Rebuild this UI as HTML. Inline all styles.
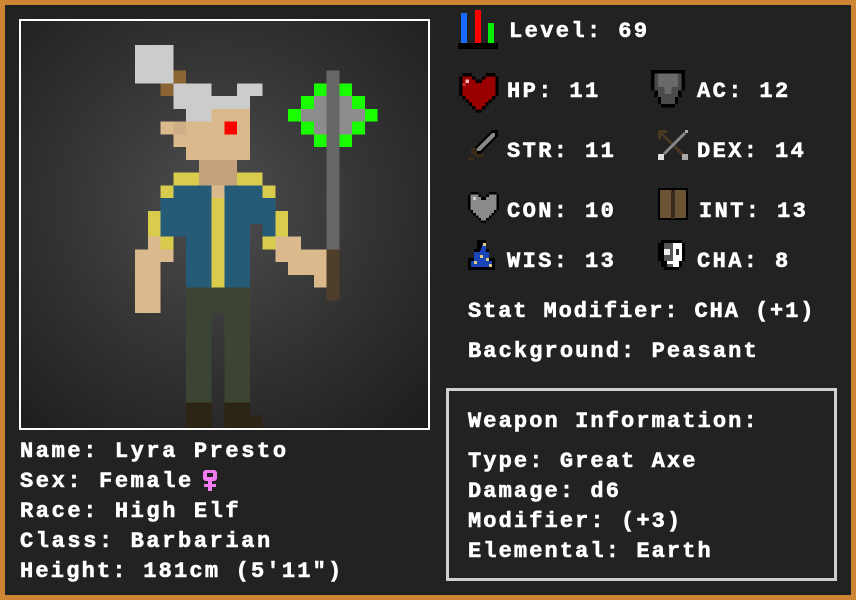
<!DOCTYPE html>
<html><head><style>
*{margin:0;padding:0;box-sizing:border-box}
body{width:856px;height:600px;background:#cd8534;position:relative;overflow:hidden}
#bg{position:absolute;left:5px;top:5px;width:846px;height:590px;background:#222}
#port{position:absolute;left:19px;top:19px;width:411px;height:411px;border:2px solid #fff;background:radial-gradient(circle at 48% 45%,#4e4e4e 0%,#363636 45%,#1c1c1c 100%)}
.t{position:absolute;color:#fff;font-family:"Liberation Mono",monospace;font-weight:bold;font-size:22px;letter-spacing:2.4px;white-space:nowrap;line-height:22px;-webkit-text-stroke:0.6px #fff}
#wb{position:absolute;left:446px;top:388px;width:391px;height:193px;border:3px solid #cfcfcf}
svg{position:absolute}
</style></head><body>
<div id="bg"></div>
<div id="port"></div>
<svg style="left:0;top:0" width="856" height="600" shape-rendering="crispEdges">
<g transform="translate(135,45) scale(12.77)">
<rect x="0" y="0" width="3" height="3" fill="#cccccc"/>
<rect x="3" y="2" width="1" height="1" fill="#8b6434"/>
<rect x="2" y="3" width="1" height="1" fill="#8b6434"/>
<rect x="3" y="3" width="3" height="2" fill="#cccccc"/>
<rect x="8" y="3" width="2" height="1" fill="#cccccc"/>
<rect x="6" y="4" width="3" height="1" fill="#cccccc"/>
<rect x="4" y="5" width="2" height="1" fill="#cccccc"/>
<rect x="6" y="5" width="3" height="1" fill="#dab98c"/>
<rect x="2" y="6" width="7" height="1" fill="#dab98c"/>
<rect x="3" y="6" width="1" height="1" fill="#d0ae88"/>
<rect x="3" y="7" width="6" height="1" fill="#dab98c"/>
<rect x="4" y="8" width="5" height="1" fill="#dab98c"/>
<rect x="7" y="6" width="1" height="1" fill="#ff0000"/>
<rect x="5" y="9" width="3" height="2" fill="#c4a37c"/>
<rect x="3" y="10" width="2" height="1" fill="#d9cc4c"/>
<rect x="8" y="10" width="2" height="1" fill="#d9cc4c"/>
<rect x="2" y="11" width="1" height="1" fill="#d9cc4c"/>
<rect x="10" y="11" width="1" height="1" fill="#d9cc4c"/>
<rect x="3" y="11" width="3" height="1" fill="#265b78"/>
<rect x="7" y="11" width="3" height="1" fill="#265b78"/>
<rect x="6" y="11" width="1" height="1" fill="#dab98c"/>
<rect x="2" y="12" width="9" height="2" fill="#265b78"/>
<rect x="2" y="14" width="7" height="1" fill="#265b78"/>
<rect x="10" y="14" width="1" height="1" fill="#265b78"/>
<rect x="4" y="15" width="5" height="4" fill="#265b78"/>
<rect x="6" y="12" width="1" height="7" fill="#d9cc4c"/>
<rect x="1" y="13" width="1" height="2" fill="#d9cc4c"/>
<rect x="11" y="13" width="1" height="2" fill="#d9cc4c"/>
<rect x="2" y="15" width="1" height="1" fill="#d9cc4c"/>
<rect x="10" y="15" width="1" height="1" fill="#d9cc4c"/>
<rect x="1" y="15" width="1" height="1" fill="#dab98c"/>
<rect x="0" y="16" width="3" height="1" fill="#dab98c"/>
<rect x="0" y="17" width="2" height="4" fill="#dab98c"/>
<rect x="11" y="15" width="2" height="1" fill="#dab98c"/>
<rect x="11" y="16" width="4" height="1" fill="#dab98c"/>
<rect x="12" y="17" width="3" height="1" fill="#dab98c"/>
<rect x="14" y="18" width="1" height="1" fill="#dab98c"/>
<rect x="4" y="19" width="5" height="2" fill="#3c4433"/>
<rect x="4" y="21" width="2" height="7" fill="#3c4433"/>
<rect x="7" y="21" width="2" height="7" fill="#3c4433"/>
<rect x="4" y="28" width="2" height="2" fill="#2c2414"/>
<rect x="7" y="28" width="2" height="2" fill="#2c2414"/>
<rect x="9" y="29" width="1" height="1" fill="#2c2414"/>
<rect x="15" y="2" width="1" height="14" fill="#666"/>
<rect x="15" y="16" width="1" height="4" fill="#4f3e2a"/>
<rect x="14" y="4" width="1" height="3" fill="#8c8c8c"/>
<rect x="16" y="4" width="1" height="3" fill="#8c8c8c"/>
<rect x="13" y="5" width="1" height="1" fill="#8c8c8c"/>
<rect x="17" y="5" width="1" height="1" fill="#8c8c8c"/>
<g fill="#1aff00">
<rect x="14" y="3" width="1" height="1"/><rect x="16" y="3" width="1" height="1"/>
<rect x="13" y="4" width="1" height="1"/><rect x="17" y="4" width="1" height="1"/>
<rect x="12" y="5" width="1" height="1"/><rect x="18" y="5" width="1" height="1"/>
<rect x="13" y="6" width="1" height="1"/><rect x="17" y="6" width="1" height="1"/>
<rect x="14" y="7" width="1" height="1"/><rect x="16" y="7" width="1" height="1"/>
</g>
</g>
<!-- level icon -->
<rect x="458" y="43" width="40" height="6" fill="#000"/>
<rect x="461" y="13" width="6" height="30" fill="#1a6cff"/>
<rect x="475" y="10" width="6" height="33" fill="#f00"/>
<rect x="488" y="23" width="6" height="20" fill="#0e0"/>
<!-- heart -->
<g transform="translate(459,73) scale(3.3)">
<path d="M1 0h3v1h1v1h2v-1h1v-1h3v1h1v6h-1v1h-1v1h-1v1h-1v1h-1v1h-2v-1h-1v-1h-1v-1h-1v-1h-1v-1h-1v-6h1z" fill="#000"/>
<path d="M1 1h3v1h1v1h2v-1h1v-1h3v6h-1v1h-1v1h-1v1h-1v1h-2v-1h-1v-1h-1v-1h-1v-1h-1z" fill="#9a0000"/>
<rect x="2" y="2" width="1" height="1" fill="#f2b6b6"/><rect x="1" y="3" width="1" height="1" fill="#c33"/>
</g>
<!-- shield -->
<g transform="translate(651,70) scale(3.4)">
<path d="M0 0h10v6h-1v2h-1v2h-1v1h-4v-1h-1v-2h-1v-2h-1z" fill="#000"/>
<path d="M1 1h8v5h-1v2h-1v2h-4v-2h-1v-2h-1z" fill="#4a4a4a"/>
<path d="M2 1h6v4h-2v2h-2v-2h-2z" fill="#6a6a6a"/>
</g>
<!-- sword -->
<g transform="translate(468,130) scale(3)">
<path d="M8 0h2v2l-6 6h-2v-2z" fill="#000"/>
<path d="M8 1h1v1l-5 5h-1v-1z" fill="#888"/>
<rect x="1" y="6" width="2" height="2" fill="#3a2a1a"/><rect x="3" y="8" width="2" height="1" fill="#3a2a1a"/><rect x="0" y="9" width="2" height="1" fill="#3a2a1a"/><rect x="2" y="8" width="1" height="1" fill="#3a2a1a"/>
</g>
<!-- crossbow -->
<g transform="translate(658,130) scale(3)">
<rect x="0" y="0" width="3" height="1" fill="#4a3a22"/><rect x="0" y="1" width="1" height="2" fill="#4a3a22"/>
<path d="M1 1l8 8" stroke="#4a3a22" stroke-width="1" fill="none" shape-rendering="auto"/>
<path d="M9 1l-7 7" stroke="#888" stroke-width="1" fill="none" shape-rendering="auto"/>
<rect x="9" y="0" width="1" height="1" fill="#aaa"/>
<rect x="0" y="8" width="2" height="2" fill="#ddd"/>
<rect x="8" y="8" width="2" height="2" fill="#aaa"/>
</g>
<!-- con heart gray -->
<g transform="translate(468,192) scale(2.6)">
<path d="M1 0h3v1h1v1h2v-1h1v-1h3v1h1v6h-1v1h-1v1h-1v1h-1v1h-1v1h-2v-1h-1v-1h-1v-1h-1v-1h-1v-1h-1v-6h1z" fill="#000"/>
<path d="M1 1h3v1h1v1h2v-1h1v-1h3v6h-1v1h-1v1h-1v1h-1v1h-2v-1h-1v-1h-1v-1h-1v-1h-1z" fill="#8a8a8a"/>
<rect x="2" y="2" width="1" height="1" fill="#ccc"/>
</g>
<!-- book -->
<rect x="658" y="188" width="30" height="32" fill="#000"/>
<rect x="660" y="190" width="12" height="28" fill="#6b5434"/>
<rect x="674" y="190" width="12" height="28" fill="#6b5434"/>
<rect x="671" y="191" width="4" height="28" fill="#3a2c1a"/>
<!-- wizard hat -->
<g transform="translate(468,240) scale(3)">
<path d="M4 0h2v3h1v3h2v4h-9v-4h2v-3h1v-3z" fill="#000"/>
<path d="M5 1h1v3h1v3h1v2h-7v-2h1v-3h2z" fill="#1a44b8"/>
<rect x="5" y="1" width="1" height="1" fill="#d9cc7a"/><rect x="2" y="7" width="1" height="1" fill="#d9cc7a"/><rect x="6" y="6" width="1" height="1" fill="#d9cc7a"/><rect x="4" y="5" width="1" height="1" fill="#d9cc7a"/><rect x="7" y="8" width="1" height="1" fill="#d9cc7a"/>
</g>
<!-- mask -->
<g transform="translate(658,240) scale(3)">
<path d="M1 0h7v1h1v6h-1v2h-1v1h-5v-1h-1v-2h-1v-6h1z" fill="#000"/>
<path d="M2 1h3v8h-2v-2h-1z" fill="#555"/>
<path d="M5 1h3v6h-1v2h-2z" fill="#fff"/>
<rect x="2" y="3" width="2" height="2" fill="#eee"/>
<rect x="6" y="3" width="1" height="2" fill="#333"/>
<rect x="3" y="7" width="2" height="1" fill="#fff"/>
</g>
<!-- female symbol -->
<rect x="203" y="470" width="14" height="11" rx="3" fill="#f27bf2"/>
<rect x="207" y="473" width="6" height="4" fill="#222"/>
<rect x="208" y="481" width="4" height="10" fill="#f27bf2"/>
<rect x="204" y="484" width="12" height="3" fill="#f27bf2"/>
</svg>
<div id="wb"></div>
<div class="t" style="left:509px;top:21px">Level: 69</div>
<div class="t" style="left:507px;top:81px">HP: 11</div>
<div class="t" style="left:697px;top:81px">AC: 12</div>
<div class="t" style="left:507px;top:141px">STR: 11</div>
<div class="t" style="left:697px;top:141px">DEX: 14</div>
<div class="t" style="left:507px;top:201px">CON: 10</div>
<div class="t" style="left:699px;top:201px">INT: 13</div>
<div class="t" style="left:507px;top:251px">WIS: 13</div>
<div class="t" style="left:697px;top:251px">CHA: 8</div>
<div class="t" style="left:468px;top:301px;letter-spacing:1.9px">Stat Modifier: CHA (+1)</div>
<div class="t" style="left:468px;top:341px;letter-spacing:2.1px">Background: Peasant</div>
<div class="t" style="left:468px;top:411px;letter-spacing:2.1px">Weapon Information:</div>
<div class="t" style="left:468px;top:451px;letter-spacing:2.1px">Type: Great Axe</div>
<div class="t" style="left:468px;top:481px;letter-spacing:2.1px">Damage: d6</div>
<div class="t" style="left:468px;top:511px;letter-spacing:2.1px">Modifier: (+3)</div>
<div class="t" style="left:468px;top:541px;letter-spacing:2.1px">Elemental: Earth</div>
<div class="t" style="left:20px;top:441px;letter-spacing:2.6px">Name: Lyra Presto</div>
<div class="t" style="left:20px;top:471px;letter-spacing:2.6px">Sex: Female</div>
<div class="t" style="left:20px;top:501px;letter-spacing:2.6px">Race: High Elf</div>
<div class="t" style="left:20px;top:531px;letter-spacing:2.6px">Class: Barbarian</div>
<div class="t" style="left:20px;top:561px;letter-spacing:2.2px">Height: 181cm (5'11")</div>
</body></html>
